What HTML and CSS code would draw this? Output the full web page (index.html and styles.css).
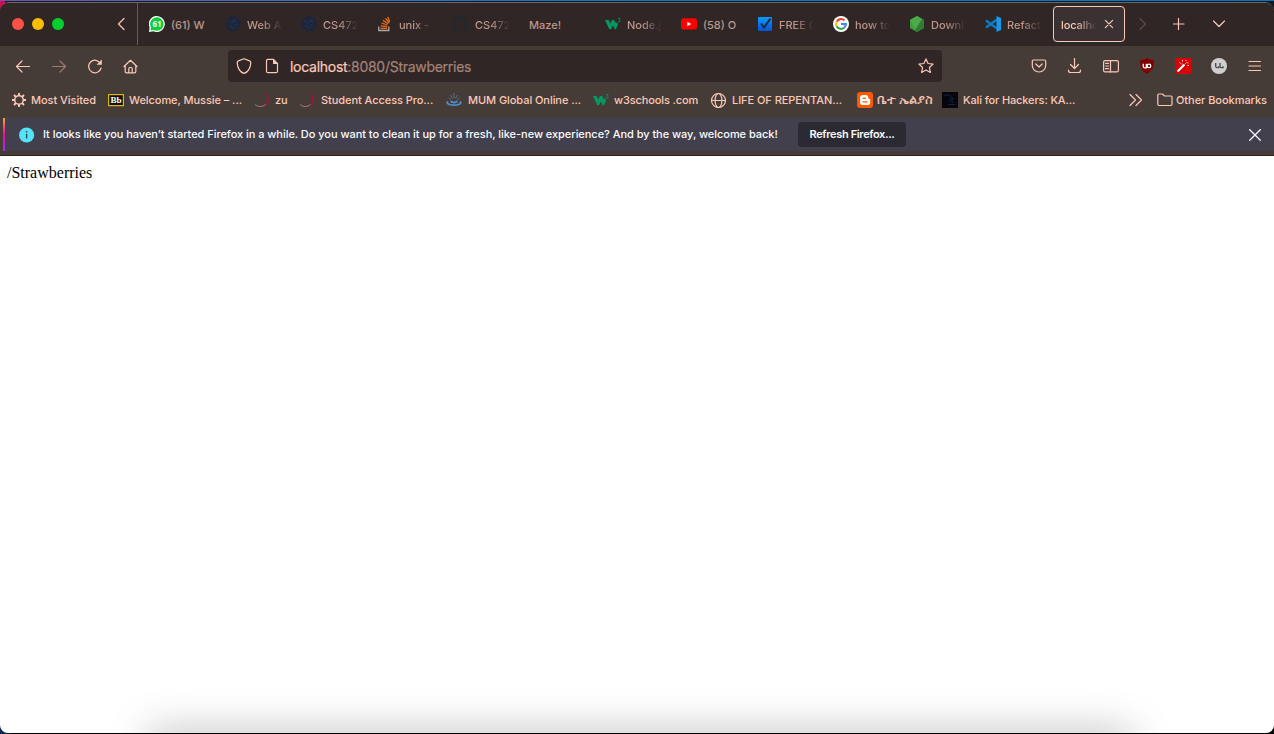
FILE: index.html
```html
<!DOCTYPE html>
<html lang="en">
<head>
<meta charset="utf-8">
<title>localhost:8080/Strawberries</title>
<link rel="stylesheet" href="styles.css">
</head>
<body>
<svg class="defs" width="0" height="0">
  <symbol id="seal" viewBox="0 0 16 16"><circle cx="8" cy="8" r="7" fill="#202536" stroke="#202536" stroke-width="1.6" stroke-dasharray="1.6 .8"/><path d="M3 6l2-2M6 8l3-4 1 2M10 4l2 2M4 9l3 2M9 9l3-1M7 12l3-1M12 10v1" fill="none" stroke="#17335f" stroke-width="1.2"/></symbol>
  <symbol id="w3" viewBox="0 0 16 16"><path d="M0 4h3.600l1.700 3.500L7 4h2l2 3.500L12 6l1 2.200-2 5h-1.200L8 9.500l-2 3.700H4.300z" fill="#059862"/><path d="M12.800 2.500h2.400l-1.200 1.500c1.500 0 1.600 2 0 2.100-.7 0-1.100-.4-1.300-.9" fill="none" stroke="#059862" stroke-width=".8"/></symbol>
  <symbol id="swirl" viewBox="0 0 16 16"><path d="M10 .5C17 3.500 16.500 14 8 15c5-2.500 7.500-9 2-14.500z" fill="#a11235"/><path d="M1 12.500c3 2.600 7.500 2.900 10.800-.3" fill="none" stroke="#bd8d86" stroke-width=".8"/></symbol>
</svg>
<div class="window">
  <div class="tabs">
    <div class="lights"><i class="red"></i><i class="yellow"></i><i class="green"></i></div>
    <svg class="scroll-left line" width="16" height="16" viewBox="0 0 16 16"><path d="M11 2.500L5.500 8l5.500 5.500"/></svg>
    <div class="tablist">
      <div class="tab"><svg width="16" height="16" viewBox="0 0 16 16"><path d="M0 16l.6-4.500A8 8 0 1 1 4.500 15.300z" fill="#fff"/><path d="M1.500 14.600l.6-3A6.700 6.700 0 1 1 4.700 14z" fill="#06cf3b"/><text x="8" y="10.800" text-anchor="middle" class="count">61</text></svg><span>(61) W</span></div>
      <div class="tab"><svg width="16" height="16"><use href="#seal"/></svg><span class="fade">Web A</span></div>
      <div class="tab"><svg width="16" height="16"><use href="#seal"/></svg><span class="fade">CS472</span></div>
      <div class="tab"><svg width="16" height="16" viewBox="0 0 16 16"><path d="M1.800 10.500v4h10v-4" fill="none" stroke="#aaa9ad" stroke-width="1.300"/><path d="M3.600 12.400h6.400M3.800 9.800l6.200.9M4.500 7l6 2M6 4.400l5.200 3.400M8.500 2.300l3.800 4.500M10.800 1l1.800 4.800" stroke="#f46d0c" stroke-width="1.300"/></svg><span class="fade">unix -</span></div>
      <div class="tab"><svg width="16" height="16" viewBox="0 0 16 16"><path fill="#24292e" d="M8 0C3.580 0 0 3.580 0 8c0 3.540 2.290 6.530 5.470 7.590.4.070.55-.170.55-.380v-1.490c-2.010.37-2.530-.49-2.690-.94-.09-.23-.48-.94-.82-1.130-.28-.15-.68-.52-.01-.53.63-.01 1.080.58 1.230.82.72 1.210 1.870.87 2.330.66.070-.52.280-.87.510-1.070-1.780-.2-3.640-.89-3.640-3.950 0-.87.310-1.590.82-2.150-.08-.2-.36-1.020.08-2.120 0 0 .67-.21 2.200.82a7.600 7.600 0 0 1 4 0c1.530-1.040 2.200-.82 2.200-.82.44 1.100.16 1.920.08 2.120.51.56.82 1.270.82 2.150 0 3.070-1.870 3.750-3.650 3.950.29.25.54.73.54 1.480v2.200c0 .21.15.46.55.38A8 8 0 0 0 8 0z"/></svg><span class="fade">CS472</span></div>
      <div class="tab"><span>Maze!</span></div>
      <div class="tab"><svg width="16" height="16"><use href="#w3"/></svg><span class="fade">Node.j</span></div>
      <div class="tab"><svg width="16" height="16" viewBox="0 0 16 16"><rect y="2.300" width="16" height="11.200" rx="2.500" fill="#f00"/><path d="M6.300 5.700v4.600L10.300 8z" fill="#fff"/></svg><span>(58) O</span></div>
      <div class="tab"><svg width="16" height="16" viewBox="0 0 16 16"><defs><linearGradient id="bl" x2="0" y2="1"><stop stop-color="#099cff"/><stop offset="1" stop-color="#0553d5"/></linearGradient></defs><rect x="1" y="1" width="14" height="14" rx="1" fill="url(#bl)"/><path d="M4 7.500l3 4 6.500-9" fill="none" stroke="#162a40" stroke-width="2"/></svg><span class="fade">FREE C</span></div>
      <div class="tab"><svg width="16" height="16" viewBox="0 0 16 16"><circle cx="8" cy="8" r="8" fill="#fff"/><g fill="none" stroke-width="2.100"><path d="M11.500 4.500A4.900 4.900 0 0 0 3.700 5.700" stroke="#ea4335"/><path d="M3.700 5.700a4.900 4.900 0 0 0 0 4.600" stroke="#fbbc05"/><path d="M3.700 10.300a4.900 4.900 0 0 0 7.500 1.400" stroke="#34a853"/><path d="M11.200 11.700A4.900 4.900 0 0 0 12.900 8H8" stroke="#4285f4"/></g></svg><span class="fade">how to</span></div>
      <div class="tab"><svg width="16" height="16" viewBox="0 0 16 16"><path d="M8 0l7 4v8l-7 4-7-4V4z" fill="#3e9b3f"/><path d="M8 0l7 4v8l-7 4-2-2 7-11z" fill="#317b35"/><path d="M1 4l7-4 5 3-7 11z" fill="#4aac48"/></svg><span class="fade">Downl</span></div>
      <div class="tab"><svg width="16" height="16" viewBox="0 0 16 16"><path d="M12 3.500L1 11.500M12 12.500L1 4.500" fill="none" stroke="#087bc9" stroke-width="2.400"/><path d="M11.500 0L16 2v12l-4.500 2z" fill="#1399ee"/></svg><span class="fade">Refact</span></div>
      <div class="tab active"><span class="fade">localho</span><svg class="line" width="10" height="10" viewBox="0 0 10 10"><path d="M1.400 1.400l7.200 7.200M8.600 1.400L1.400 8.600"/></svg></div>
    </div>
    <svg class="line dim tab-next" width="8" height="14" viewBox="0 0 8 14"><path d="M1 1.500L6.500 7 1 12.500"/></svg>
    <svg class="line tab-plus" width="12" height="12" viewBox="0 0 12 12"><path d="M5.500.5v11M0 6h11"/></svg>
    <svg class="line tab-all" width="12" height="12" viewBox="0 0 12 12"><path d="M.5 3L6 8.500 11.500 3"/></svg>
  </div>
  <div class="toolbar">
    <div class="nav">
      <svg class="line" width="16" height="16" viewBox="0 0 16 16"><path d="M14.500 8.500h-13M7 3L1.500 8.500 7 14"/></svg>
      <svg class="line muted" width="16" height="16" viewBox="0 0 16 16"><path d="M1.500 8.500h13M9 3l5.500 5.500L9 14"/></svg>
      <svg class="line" width="16" height="16" viewBox="0 0 16 16"><path d="M13.500 5.500A6.300 6.300 0 1 0 14.100 10"/><path d="M14.800 1.500v5.200H9.600z" class="solid"/></svg>
      <svg class="line" width="16" height="16" viewBox="0 0 16 16"><path d="M1 8.500l6.500-6.200L14 8.500M2.200 7.800v5.700q0 1.300 1.200 1.300h8.200q1.200 0 1.200-1.300V7.800M5.800 14.500V10.500q0-1 1-1h1.400q1 0 1 1v4"/></svg>
    </div>
    <div class="url">
      <svg class="line" width="16" height="16" viewBox="0 0 16 16"><path d="M8 .8l5.600 2.100q1.200.5 1.200 1.700C14.500 9 12.500 14 8 15.400 3.500 14 1.500 9 1.200 4.600q0-1.200 1.200-1.700z"/></svg>
      <svg class="line page" width="16" height="16" viewBox="0 0 16 16"><path d="M9.500 1.300H4q-1.500 0-1.500 1.500v10.400q0 1.500 1.500 1.500h8q1.500 0 1.500-1.500V5.300z"/><path d="M9 1v5h5z" class="solid"/></svg>
      <span class="address">localhost<em>:8080/Strawberries</em></span>
      <svg class="line star" width="16" height="16" viewBox="0 0 16 16"><path d="M8 .9l2.100 4.600 5 .6-3.700 3.400 1 5L8 12l-4.400 2.500 1-5L.9 6.100l5-.6z"/></svg>
    </div>
    <div class="actions">
      <svg class="line" width="16" height="16" viewBox="0 0 16 16"><path d="M2.500 2h11q1.200 0 1.200 1.200V7.500a6.700 6.500 0 0 1-13.400 0V3.200Q1.300 2 2.500 2zM4.800 6L8 9l3.200-3"/></svg>
      <svg class="line" width="16" height="16" viewBox="0 0 16 16"><path d="M7.500.5v10M3.500 6.500l4 4 4-4M1.500 12v.5q0 2 2 2h8q2 0 2-2V12"/></svg>
      <svg class="line" width="16" height="16" viewBox="0 0 16 16"><rect x=".6" y="2.600" width="14.800" height="11.300" rx="1.500"/><path d="M7.500 2.600v11.300M2.500 5.300h3M2.500 8h3M2.500 10.700h3"/></svg>
      <svg width="16" height="16" viewBox="0 0 16 16"><path d="M8 0q3 2 6.700 2C15.500 9 13 13 8 16 3 13 .5 9 1.300 2 5 2 8 0 8 0z" fill="#800004"/><path d="M4.200 5.800v2.400q0 1.600 1.600 1.600h1.500V5.800" fill="none" stroke="#fff" stroke-width="1.300"/><circle cx="10" cy="7.900" r="1.800" fill="none" stroke="#fff" stroke-width="1.300"/></svg>
      <svg width="16" height="16" viewBox="0 0 16 16"><path fill="#d80000" d="M0 0h16v16H0z"/><path d="M2.500 13.500l7-7" stroke="#fff" stroke-width="2.200"/><path d="M10.200 5.800l1.300-1.300M4.500 4.500l1.200.8M7.500 2v1.500M12.500 7.300l1.500.3M10.500 2.500h1M13 4.500v1M6.500 6h1" stroke="#fff" stroke-width=".9"/></svg>
      <svg width="16" height="16" viewBox="0 0 16 16"><circle cx="8" cy="8" r="8" fill="#cfcfcf"/><path d="M4.700 5v3.200q0 1.500 1.500 1.500h1.500V8.200M9 5v3.200q0 1.500 1.500 1.500H12V8.200" fill="none" stroke="#494547" stroke-width="1.300"/></svg>
      <svg class="line" width="16" height="16" viewBox="0 0 16 16"><path d="M2 3.500h11.500M2 8h11.500M2 12.500h11.500"/></svg>
    </div>
  </div>
  <div class="bookmarks">
    <div class="bm b1"><svg width="16" height="16" viewBox="0 0 16 16" class="line"><circle cx="8" cy="8" r="4.300" stroke-width="1.500"/><path stroke-width="1.900" stroke-linecap="butt" d="M8 1v3M8 12v3M1 8h3M12 8h3M3 3l2 2M11 11l2 2M13 3l-2 2M5 11l-2 2"/></svg><span>Most Visited</span></div>
    <div class="bm b2"><svg width="16" height="16" viewBox="0 0 16 16"><rect x=".6" y="2.600" width="14.800" height="11" fill="#111" stroke="#e0b700" stroke-width="1.200"/><text x="8" y="11.400" text-anchor="middle" class="bb">Bb</text></svg><span>Welcome, Mussie – ...</span></div>
    <div class="bm b3"><svg width="16" height="16"><use href="#swirl"/></svg><span>zu</span></div>
    <div class="bm b4"><svg width="16" height="16"><use href="#swirl"/></svg><span>Student Access Pro...</span></div>
    <div class="bm b5"><svg width="16" height="16" viewBox="0 0 16 16"><path d="M2 9.500q-2 1.800 1.500 3 4.500 1.300 9 0 3.500-1.200 1.500-3M4.500 9.300q3.500 2.500 7 0" fill="none" stroke="#4a91cf" stroke-width="1.800"/><path d="M8 1v5M4.500 3l2 3.500M11.500 3l-2 3.500M2.500 5.500L5 8M13.500 5.500L11 8" stroke="#587d9c" stroke-width=".8"/></svg><span>MUM Global Online ...</span></div>
    <div class="bm b6"><svg width="16" height="16"><use href="#w3"/></svg><span>w3schools .com</span></div>
    <div class="bm b7"><svg width="16" height="16" viewBox="0 0 16 16" class="line"><circle cx="8.500" cy="8.500" r="7"/><ellipse cx="8.500" cy="8.500" rx="3.400" ry="7"/><path d="M1.500 8.500h14"/></svg><span>LIFE OF REPENTAN...</span></div>
    <div class="bm b8"><svg width="16" height="16" viewBox="0 0 16 16"><rect width="16" height="16" rx="3" fill="#ff5a00"/><path d="M6 3h2.500q2.800 0 2.800 3 0 .8.900.8 1 0 1 1v2.400q0 2.800-2.800 2.800H6q-3 0-3-2.800V6q0-3 3-3z" fill="#fff"/><path d="M6 6.300h2.500M6 9.800h4" stroke="#ff5a00" stroke-width="1.300" stroke-linecap="round"/></svg><span class="amharic">ቤተ ኤልያስ</span></div>
    <div class="bm b9"><svg width="16" height="16" viewBox="0 0 16 16"><path fill="#04060c" d="M0 0h16v16H0z"/><path d="M2 4q4-3 7 0M8 5q4 0 3 3M11 8q-4-3-3 1 3 0 3 2M6 12.500h7" fill="none" stroke="#172044"/></svg><span>Kali for Hackers: KA...</span></div>
    <svg class="line more" width="14" height="14" viewBox="0 0 14 14"><path d="M1 1.500L6.500 7 1 12.500M7 1.500L12.500 7 7 12.500"/></svg>
    <div class="bm other"><svg class="line" width="16" height="16" viewBox="0 0 16 16"><path d="M2 2h3.500l2 2H14q1 0 1 1v7.300q0 1.200-1.200 1.200H2q-1.200 0-1.200-1.200v-9Q.8 2 2 2z"/></svg><span>Other Bookmarks</span></div>
  </div>
  <div class="notice">
    <svg width="16" height="16" viewBox="0 0 16 16"><circle cx="7.600" cy="8" r="7.600" fill="#54e4fa"/><path d="M7.600 6.800v4.700M7.600 4v1.600" stroke="#36505e" stroke-width="1.500"/></svg>
    <span class="message">It looks like you haven’t started Firefox in a while. Do you want to clean it up for a fresh, like-new experience? And by the way, welcome back!</span>
    <button>Refresh Firefox...</button>
    <svg class="close" width="12" height="12" viewBox="0 0 12 12"><path d="M.3.300l11.400 11.400M11.700.300L.300 11.700"/></svg>
  </div>
  <main>/Strawberries<div class="shade"></div></main>
</div>
</body>
</html>
```
FILE: styles.css
```css
* { box-sizing: border-box; }
body {
  margin: 0; width: 1274px; height: 734px; overflow: hidden; padding: 2px 0 1px;
  background: linear-gradient(90deg, #71549d, #426eae 25%, #1577b8 50%, #0875bd) 0 0 / 100% 1px no-repeat,
    linear-gradient(90deg, #d00a55 5px, #111b2b 5px, #101820) 0 1px / 100% 8px no-repeat,
    linear-gradient(90deg, #07284f 8px, #000 12px, #000) 0 100% / 100% 8px no-repeat;
  font-family: Inter, "Noto Sans", sans-serif; font-weight: 500; color: #fbc8b7;
}
.defs { position: absolute; }
svg { flex: none; display: block; }
.window { height: 731px; display: flex; flex-direction: column; border-radius: 9px 9px 8px 8px; overflow: hidden; background: #463c37; border-top: 1px solid #6c6668; }
.line { fill: none; stroke: #fbc8b7; stroke-width: 1.2; stroke-linecap: round; stroke-linejoin: round; }
.solid { fill: #fbc8b7; stroke: none; }
.muted { opacity: .45; }
.dim { opacity: .22; }
.tabs { flex: none; height: 43px; display: flex; align-items: center; background: #2f2625; padding-bottom: 1px; }
.lights { display: flex; gap: 8px; padding-left: 12px; width: 113px; }
.lights i { width: 12px; height: 12px; border-radius: 50%; }
.red { background: #ff5048; }
.yellow { background: #ffbd00; }
.green { background: #00d12f; }
.scroll-left { margin-right: 8px; }
.tablist { display: flex; align-items: center; height: 42px; border-left: 1px solid #655b5a; padding-left: 3px; }
.tab { width: 76px; height: 36px; padding-left: 8px; display: flex; align-items: center; gap: 6px; font-size: 11px; color: #bd978c; white-space: nowrap; }
.tab span { width: 37px; overflow: hidden; padding-top: 2px; }
.fade { mask-image: linear-gradient(90deg, #000 40%, transparent 96%); }
.count { font: 700 8px "Open Sans", sans-serif; fill: #fff; }
.bb { font: 700 9px "Liberation Serif", serif; fill: #fff; }
.tab.active { width: 72px; border: 1px solid #fbc8b7; border-radius: 4px; background: #3a3232; color: #fbc8b7; padding-left: 7px; }
.tab.active span { width: 37px; letter-spacing: -.1px; }
.tab-next { margin-left: 14px; }
.tab-plus { margin-left: 26px; }
.tab-all { margin-left: 28px; }
.toolbar { flex: 0 0 40px; display: flex; align-items: center; }
.nav { display: flex; gap: 20px; padding-left: 15px; width: 228px; }
.url { width: 714px; height: 32px; border-radius: 4px; background: #2f2625; padding: 0 8px; display: flex; align-items: center; }
.page { margin-left: 12px; }
.address { margin-left: 10px; font-size: 14px; font-weight: 400; letter-spacing: -.28px; padding-top: 1px; -webkit-text-stroke: .2px; }
.address em { font-style: normal; color: #a48379; }
.star { margin-left: auto; }
.actions { display: flex; gap: 20px; padding-left: 89px; }
.bookmarks { flex: 0 0 32px; display: flex; align-items: center; padding: 0 7px 4px 11px; white-space: nowrap; font-size: 11px; }
.bm { display: flex; align-items: center; gap: 5px; letter-spacing: -.06px; }
.b1 { width: 97px; gap: 4px; }
.b2 { width: 146px; }
.b3 { width: 45px; }
.b4 { width: 147px; gap: 6px; }
.b5 { width: 147px; gap: 6px; }
.b6 { width: 117px; letter-spacing: -.13px; }
.b7 { width: 147px; gap: 6px; }
.b8 { width: 85px; gap: 4px; }
.b9 { width: 133px; letter-spacing: -.12px; }
.b1, .other { letter-spacing: -.04px; }
.amharic { font-size: 12.5px; letter-spacing: -.1px; -webkit-text-stroke: .2px; }
.more { margin-left: 54px; }
.other { gap: 3px; margin-left: auto; }
.notice { flex: 0 0 33px; margin-left: 3px; display: flex; align-items: center; padding-left: 14px; border-left: 2px solid; border-image: linear-gradient(#ffad36, #f20aa0 50%, #9b31ff) 1; background: #42404d; color: #fbfbfe; font-size: 11px; }
.message { margin-left: 8px; width: 755px; white-space: nowrap; letter-spacing: -.045px; padding-bottom: 1px; }
.notice button { width: 108px; height: 25px; padding: 0 0 1px; border: 0; border-radius: 4px; background: #2b2a33; color: #fbfbfe; font: 600 11px Inter, sans-serif; letter-spacing: -.35px; }
.close { margin-left: auto; margin-right: 13px; fill: none; stroke: #fbfbfe; stroke-width: 1.3; }
main { flex: 1; margin-top: 4px; border-top: 1px solid #2d2221; background: #fff; color: #000; position: relative; overflow: hidden; padding: 8px 7px; font: 16px/18px "Liberation Serif", serif; }
.shade { position: absolute; left: 150px; right: 145px; bottom: -30px; height: 30px; box-shadow: 0 0 40px 2px rgba(0, 0, 0, .25); }
```
